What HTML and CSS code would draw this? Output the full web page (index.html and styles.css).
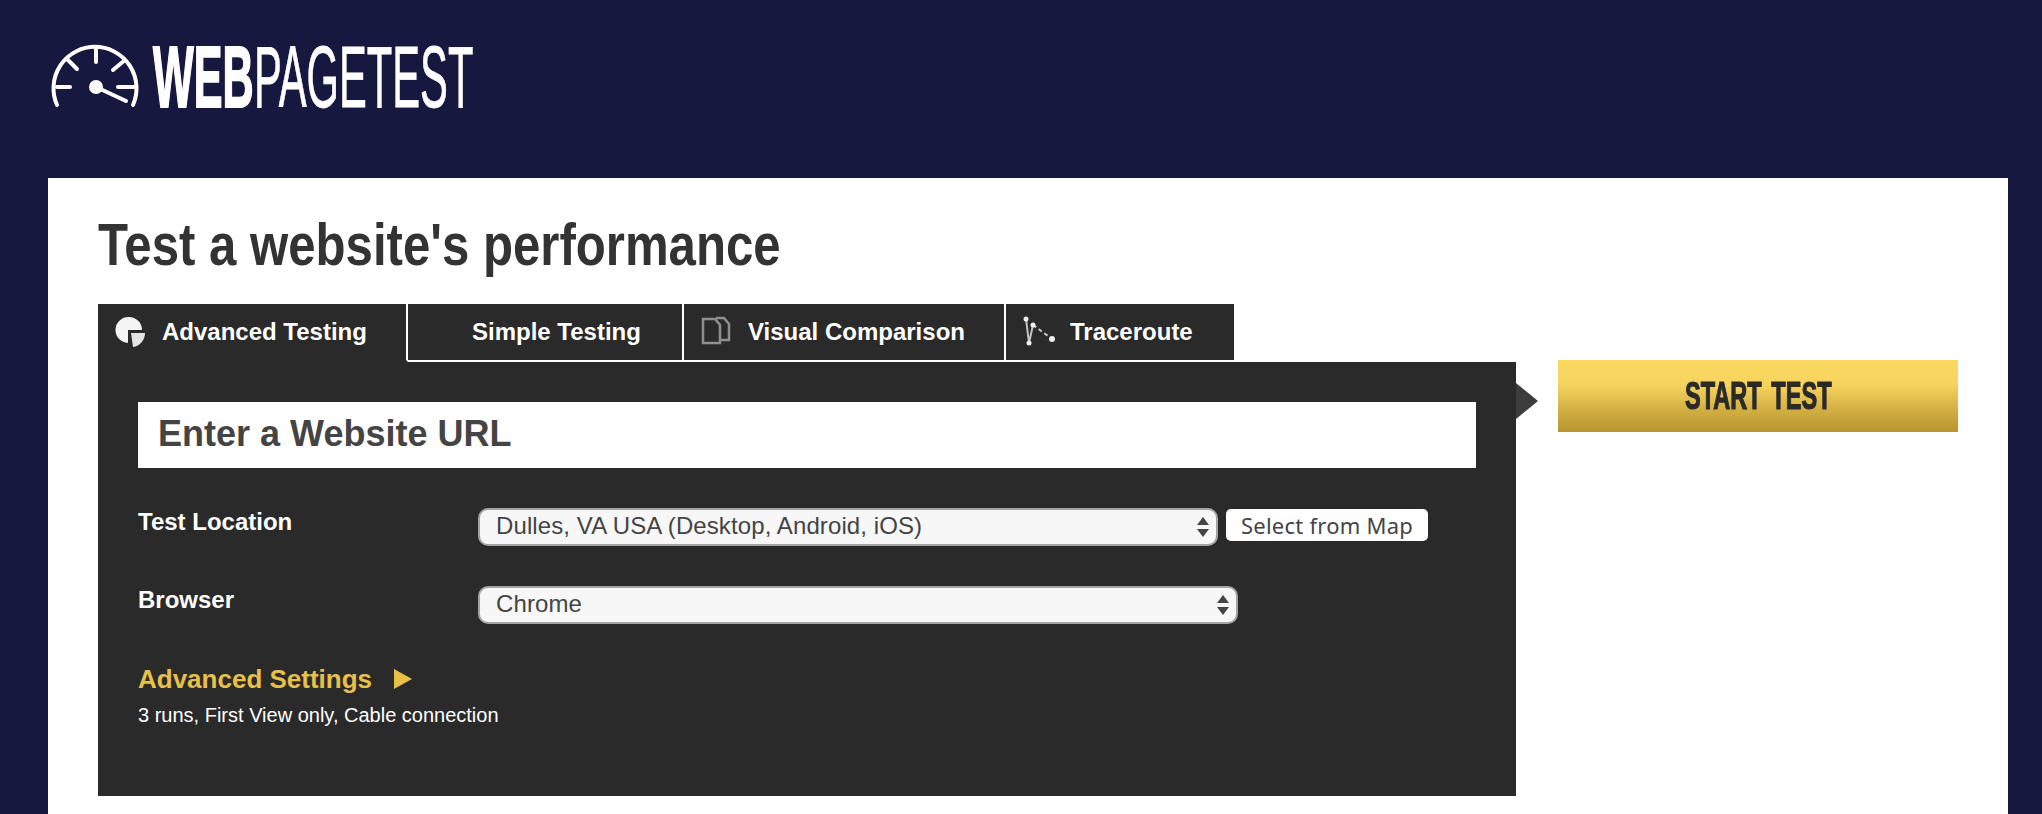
FILE: index.html
```html
<!DOCTYPE html>
<html lang="en">
<head>
<meta charset="utf-8">
<title>WebPageTest - Website Performance and Optimization Test</title>
<link rel="stylesheet" href="styles.css">
</head>
<body>
<header class="header">
  <div class="logo" aria-label="WebPageTest">
    <svg class="gauge" width="90" height="66" viewBox="0 0 90 66">
      <g fill="none" stroke="#fff" stroke-width="4" stroke-linecap="round">
        <path d="M7 63 A41.5 41.5 0 1 1 83 63"/>
        <path d="M46 6 V20 M18 18 L27 27 M75 18 L63 28 M7 45 H20 M68 45 H84"/>
        <path d="M46 45 L76 59"/>
      </g>
      <circle cx="46" cy="45" r="7" fill="#fff"/>
    </svg>
    <span class="logo-word logo-web"><span class="logo-ink">WEB</span></span>
    <span class="logo-word logo-page"><span class="logo-ink">PAGETEST</span></span>
  </div>
</header>
<main class="card">
  <h1 class="title">Test a website's performance</h1>
  <div class="work">
    <section class="left">
      <nav class="tabs">
        <a class="tab tab-active tab-advanced">
          <svg class="tab-icon" width="30" height="30" viewBox="0 0 30 30">
            <path d="M13 0 A13 13 0 0 1 26 13 L12 13 L12 26 A13 13 0 0 1 13 0 Z" fill="#f4f4f4"/>
            <path d="M15 16 H29 C29 23 24 29 17 30 Z" fill="#e4e4e4"/>
          </svg>
          Advanced Testing
        </a>
        <a class="tab tab-simple"><span class="tab-icon"></span>Simple Testing</a>
        <a class="tab tab-visual">
          <svg class="tab-icon" width="30" height="30" viewBox="0 0 30 30" fill="none" stroke="#8f8f8f" stroke-width="2.5">
            <path d="M1 2 H13 L18 8 V26 H1 Z"/>
            <path d="M14 1 H22 L27 7 V23 H19"/>
          </svg>
          Visual Comparison
        </a>
        <a class="tab tab-trace">
          <svg class="tab-icon" width="30" height="30" viewBox="0 0 30 30" fill="none" stroke="#c4c4c4" stroke-width="2">
            <path d="M2 2 L5 26 L9 8"/>
            <path d="M9 8 L28 22" stroke-dasharray="4 3"/>
            <g fill="#eee" stroke="none">
              <circle cx="2" cy="2" r="2.5"/><circle cx="5" cy="26" r="2.5"/><circle cx="9" cy="8" r="2.5"/><circle cx="28" cy="22" r="3"/>
            </g>
          </svg>
          Traceroute
        </a>
      </nav>
      <form class="panel">
        <span class="panel-arrow"></span>
        <input class="url" type="text" placeholder="Enter a Website URL" aria-label="Website URL">
        <div class="field field-location">
          <label class="field-label">Test Location</label>
          <div class="select-wrap select-short">
            <select class="select"><option>Dulles, VA USA (Desktop, Android, iOS)</option></select>
            <svg class="select-arrows" width="12" height="21" viewBox="0 0 12 21"><path d="M6 0 L12 8 H0 Z M0 12 H12 L6 20 Z" fill="#444"/></svg>
          </div>
          <button class="map-btn" type="button">Select from Map</button>
        </div>
        <div class="field field-browser">
          <label class="field-label">Browser</label>
          <div class="select-wrap select-long">
            <select class="select"><option>Chrome</option></select>
            <svg class="select-arrows" width="12" height="21" viewBox="0 0 12 21"><path d="M6 0 L12 8 H0 Z M0 12 H12 L6 20 Z" fill="#444"/></svg>
          </div>
        </div>
        <div class="adv"><span>Advanced Settings</span><i class="adv-arrow"></i></div>
        <p class="summary">3 runs, First View only, Cable connection</p>
      </form>
    </section>
    <aside class="right"><button class="start" type="button"><span class="start-label">START TEST</span></button></aside>
  </div>
</main>
</body>
</html>
```
FILE: styles.css
```css
* { box-sizing: border-box; }
html, body { margin: 0; height: 100%; }
body {
  background: #16183f;
  font-family: "Liberation Sans", Arial, sans-serif;
  overflow: hidden;
}
.header { height: 178px; padding: 42px 0 0 50px; }
.logo { display: flex; align-items: flex-start; filter: blur(0.6px); }
.gauge { flex: none; margin: 0 13px 0 0; }
.logo-word { display: block; height: 70px; flex: none; }
.logo-web { width: 101px; }
.logo-page { width: 219px; }
.logo-ink {
  display: inline-block;
  transform-origin: 0 0;
  color: #fff;
  font-size: 88px;
  line-height: 70px;
  white-space: nowrap;
}
.logo-web .logo-ink { font-weight: 700; transform: scaleX(0.49); -webkit-text-stroke: 2px #fff; }
.logo-page .logo-ink { font-weight: 400; transform: scaleX(0.474); -webkit-text-stroke: 0.8px #fff; }
.card {
  margin: 0 34px 0 48px;
  height: 636px;
  padding: 0 50px;
  background: #fff;
}
.title {
  margin: 0;
  height: 126px;
  padding-top: 34px;
  font-size: 60px;
  line-height: 66px;
  font-weight: 700;
  color: #333;
  white-space: nowrap;
  transform: scaleX(0.819);
  transform-origin: 0 0;
}
.work { display: flex; }
.left { width: 1418px; }
.tabs { display: flex; height: 58px; }
.tab {
  display: flex;
  flex: none;
  align-items: center;
  gap: 16px;
  height: 58px;
  padding: 0 0 0 18px;
  background: #2a2a2a;
  border-right: 2px solid #fff;
  border-bottom: 2px solid #fff;
  color: #fff;
  font-size: 24px;
  font-weight: 700;
  white-space: nowrap;
}
.tab-advanced { width: 310px; }
.tab-simple { width: 276px; }
.tab-visual { width: 322px; }
.tab-trace { width: 228px; }
.tab-active { border-bottom-color: #2a2a2a; }
.tab:last-child { border-right: 0; }
.tab-icon { flex: none; width: 30px; height: 30px; overflow: visible; filter: blur(0.7px); }
.panel {
  position: relative;
  height: 434px;
  padding: 40px 40px 0;
  background: #2a2a2a;
}
.panel-arrow {
  position: absolute;
  top: 21px;
  left: 100%;
  border-left: 22px solid #3c3c3c;
  border-top: 18px solid transparent;
  border-bottom: 18px solid transparent;
}
.url {
  display: block;
  width: 100%;
  height: 66px;
  padding: 0 20px 2px;
  border: 0;
  border-radius: 0;
  background: #fff;
  font: 700 36px "Liberation Sans", Arial, sans-serif;
  outline: 0;
}
.url::placeholder { color: #444; opacity: 1; }
.field { display: flex; align-items: flex-start; }
.field-location { margin-top: 40px; height: 78px; }
.field-browser { height: 78px; }
.field-label {
  width: 340px;
  flex: none;
  padding-top: 1px;
  color: #fff;
  font-size: 24px;
  line-height: 26px;
  font-weight: 700;
}
.select-wrap { position: relative; flex: none; height: 38px; }
.select-short { width: 740px; }
.select-long { width: 760px; }
.select {
  display: block;
  width: 100%;
  height: 38px;
  padding: 0 40px 3px 16px;
  appearance: none;
  border: 2px solid #a3a3a3;
  border-radius: 10px;
  background: #f7f7f7;
  color: #444;
  font: 400 24px "Liberation Sans", Arial, sans-serif;
  letter-spacing: 0.1px;
}
.select-arrows { position: absolute; top: 9px; right: 9px; }
.map-btn {
  margin: 1px 0 0 8px;
  width: 202px;
  height: 32px;
  padding: 0;
  border: 0;
  border-radius: 5px;
  background: #fff;
  color: #444;
  font: 400 22px "Noto Sans", sans-serif;
  letter-spacing: 0.25px;
}
.adv {
  display: flex;
  align-items: center;
  gap: 22px;
  height: 30px;
  color: #e8c048;
  font-size: 26px;
  font-weight: 700;
}
.adv-arrow {
  border-left: 18px solid #e8c048;
  border-top: 10px solid transparent;
  border-bottom: 10px solid transparent;
}
.summary { margin: 9px 0 0; color: #fff; font-size: 20px; line-height: 24px; }
.right { margin-left: 42px; padding-top: 56px; }
.start {
  display: block;
  width: 400px;
  height: 72px;
  padding: 0;
  border: 0;
  background: linear-gradient(#fbd960 0%, #f6d35e 35%, #d2ae42 70%, #b8962e 100%);
}
.start-label {
  display: inline-block;
  transform: scaleX(0.62);
  color: #2a2a2a;
  font: 700 38px "Liberation Sans", sans-serif;
  word-spacing: 5px;
  -webkit-text-stroke: 1.2px #2a2a2a;
  white-space: nowrap;
}
```
